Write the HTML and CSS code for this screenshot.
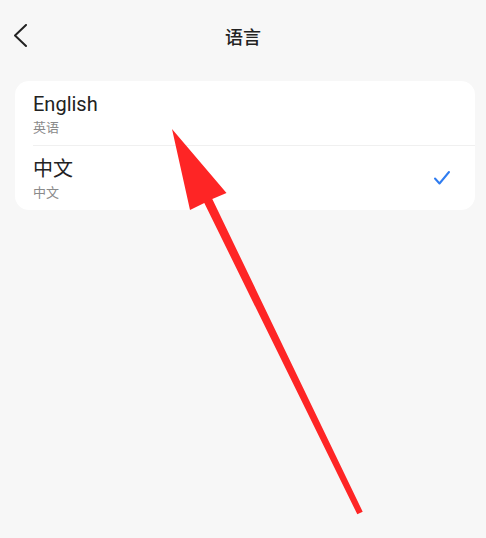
FILE: index.html
```html
<!DOCTYPE html>
<html lang="zh-CN">
<head>
  <meta charset="UTF-8">
  <title>语言</title>
  <link rel="stylesheet" href="styles.css">
</head>
<body>
  <div class="page">
    <header class="topbar">
      <button class="back" aria-label="返回">
        <svg width="14" height="24" viewBox="0 0 14 24">
          <polyline points="12,1 1,11.5 12,22" fill="none" stroke="#222" stroke-width="2" stroke-linecap="round" stroke-linejoin="round"/>
        </svg>
      </button>
      <h1 class="title">语言</h1>
      <span></span>
    </header>

    <ul class="lang-list">
      <li class="lang-item">
        <div class="lang-text">
          <div class="lang-name">English</div>
          <div class="lang-local">英语</div>
        </div>
      </li>
      <li class="lang-item selected">
        <div class="lang-text">
          <div class="lang-name">中文</div>
          <div class="lang-local">中文</div>
        </div>
        <svg class="check" width="18" height="16" viewBox="0 0 18 16">
          <polyline points="2,8.5 6.5,13.5 16,2" fill="none" stroke="#2f7cf0" stroke-width="2" stroke-linecap="round" stroke-linejoin="round"/>
        </svg>
      </li>
    </ul>

    <!-- annotation arrow drawn over the list -->
    <svg class="pointer" width="486" height="538" viewBox="0 0 486 538">
      <polygon fill="#fe2525" points="172,129 226.5,193 212.3,199 362.7,511.7 357.3,514.3 204.3,203 190,210"/>
    </svg>
  </div>
</body>
</html>
```
FILE: styles.css
```css
body {
  margin: 0;
  background: #f7f7f7;
  font-family: Roboto, "Noto Sans CJK SC", sans-serif;
  color: #222;
}
.page { position: relative; width: 486px; height: 538px; overflow: hidden; }

.topbar {
  display: grid;
  grid-template-columns: 60px 1fr 60px;
  align-items: center;
  height: 72px;
}
.back {
  background: none;
  border: 0;
  padding: 0 0 0 14px;
  display: flex;
  align-items: center;
  height: 24px;
  margin-top: -1px;
}
.title {
  margin: 0;
  text-align: center;
  font-size: 18px;
  font-weight: 500;
  font-family: "Noto Sans CJK SC", sans-serif;
}

.lang-list {
  list-style: none;
  margin: 9px 11px 0 15px;
  padding: 0;
  background: #fff;
  border-radius: 14px;
}
.lang-item {
  display: flex;
  align-items: center;
  justify-content: space-between;
  margin-left: 18px;
  padding: 10px 24px 8px 0;
  height: 46px;
}
.lang-item + .lang-item { border-top: 1px solid #f0f0f0; }
.lang-name { font-size: 20px; line-height: 24px; }
.lang-local { font-size: 13px; line-height: 18px; color: #8a8a8a; margin-top: 3px; }
.check { margin-top: -2px; }

.pointer { position: absolute; left: 0; top: 0; pointer-events: none; }
```
